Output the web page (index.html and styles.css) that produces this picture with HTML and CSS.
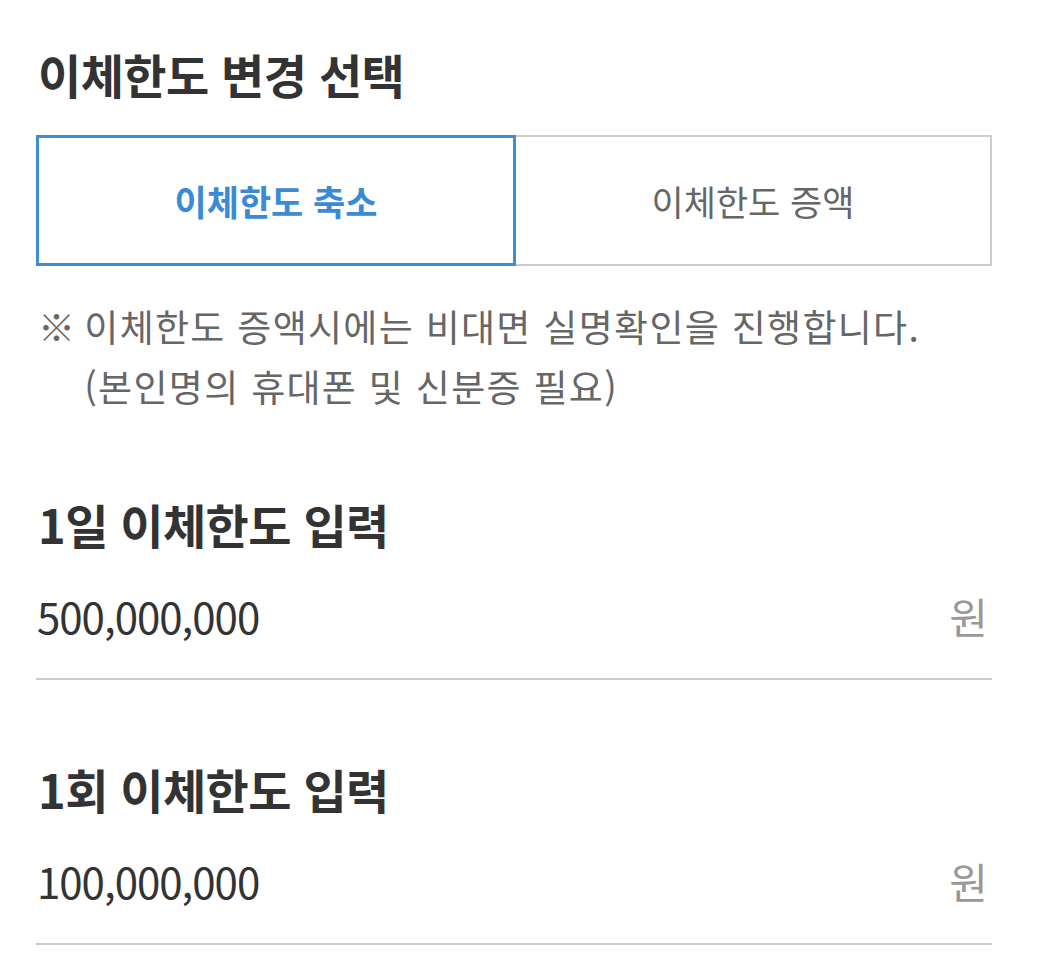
FILE: index.html
```html
<!DOCTYPE html>
<html lang="ko">
<head>
    <meta charset="UTF-8">
    <title>이체한도 변경</title>
    <link rel="stylesheet" href="styles.css">
</head>
<body>
    <div class="page">
        <!-- 변경 유형 선택 -->
        <h2 class="section-title">이체한도 변경 선택</h2>
        <div class="tabs">
            <button type="button" class="tab active">이체한도 축소</button>
            <button type="button" class="tab">이체한도 증액</button>
        </div>
        <p class="notice">
            <span class="mark">※</span>
            <span>이체한도 증액시에는 비대면 실명확인을 진행합니다.<br>(본인명의 휴대폰 및 신분증 필요)</span>
        </p>

        <!-- 한도 입력 -->
        <div class="field">
            <h2 class="section-title">1일 이체한도 입력</h2>
            <div class="amount-row">
                <input type="text" class="amount" value="500,000,000" inputmode="numeric">
                <span class="unit">원</span>
            </div>
        </div>

        <div class="field">
            <h2 class="section-title">1회 이체한도 입력</h2>
            <div class="amount-row">
                <input type="text" class="amount" value="100,000,000" inputmode="numeric">
                <span class="unit">원</span>
            </div>
        </div>
    </div>
</body>
</html>
```

FILE: styles.css
```css
body {
    font-family: "Noto Sans CJK KR", "Noto Sans", sans-serif;
    background: #ffffff;
    color: #333333;
    margin: 0;
    padding: 0;
}

.page {
    padding: 46px 52px 0 36px;
}

.section-title {
    font-size: 47px;
    font-weight: 700;
    color: #333333;
    margin: 0 0 0 2px;
    line-height: 56px;
    letter-spacing: -0.6px;
}

/* 축소 / 증액 탭 */
.tabs {
    display: flex;
    margin-top: 33px;
    height: 131px;
}

.tab {
    flex: 1;
    font-family: inherit;
    font-size: 35px;
    color: #666666;
    background: #ffffff;
    border: 2px solid #cccccc;
    border-left: none;
    cursor: pointer;
    padding: 0;
}

.tab.active {
    color: #3a8ad6;
    font-weight: 700;
    border: 3px solid #3d8ed6;
}

.notice {
    display: flex;
    gap: 8px;
    font-size: 37px;
    line-height: 60px;
    color: #666666;
    margin: 30px 0 0 2px;
    letter-spacing: 1.3px;
}

.notice .mark {
    flex: none;
}

.field {
    margin-top: 80px;
}

.field + .field {
    margin-top: 81px;
}

.amount-row {
    display: flex;
    align-items: center;
    border-bottom: 2px solid #cccccc;
    height: 126px;
}

.amount {
    flex: 1;
    min-width: 0;
    font-family: inherit;
    font-size: 42px;
    letter-spacing: -1px;
    color: #333333;
    border: none;
    outline: none;
    padding: 0 0 0 1px;
    background: transparent;
}

.unit {
    font-size: 42px;
    color: #999999;
    padding-right: 4px;
}
```
